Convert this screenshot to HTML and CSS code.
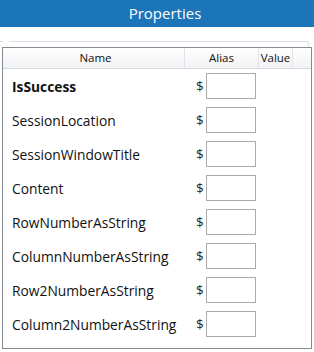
FILE: index.html
```html
<!DOCTYPE html>
<html>
<head>
<meta charset="utf-8">
<link rel="stylesheet" href="styles.css">
</head>
<body>
<div class="panel">
  <div class="title">Properties</div>
  <div class="group">
    <span class="seg"></span>
    <span class="line"></span>
  </div>
  <div class="grid">
    <div class="head">
      <div class="hc hname">Name</div>
      <div class="hc">Alias</div>
      <div class="hc">Value</div>
      <div class="hc hlast"></div>
    </div>
    <div class="row"><div class="name bold">IsSuccess</div><div class="alias"><span class="dollar">$</span><span class="box"></span></div></div>
    <div class="row"><div class="name">SessionLocation</div><div class="alias"><span class="dollar">$</span><span class="box"></span></div></div>
    <div class="row"><div class="name">SessionWindowTitle</div><div class="alias"><span class="dollar">$</span><span class="box"></span></div></div>
    <div class="row"><div class="name">Content</div><div class="alias"><span class="dollar">$</span><span class="box"></span></div></div>
    <div class="row"><div class="name">RowNumberAsString</div><div class="alias"><span class="dollar">$</span><span class="box"></span></div></div>
    <div class="row"><div class="name">ColumnNumberAsString</div><div class="alias"><span class="dollar">$</span><span class="box"></span></div></div>
    <div class="row"><div class="name">Row2NumberAsString</div><div class="alias"><span class="dollar">$</span><span class="box"></span></div></div>
    <div class="row"><div class="name">Column2NumberAsString</div><div class="alias"><span class="dollar">$</span><span class="box"></span></div></div>
  </div>
</div>
</body>
</html>
```
FILE: styles.css
```css
html, body {
  margin: 0;
  padding: 0;
  background: #ffffff;
}
.panel {
  width: 314px;
  height: 352px;
  font-family: "Open Sans", "Noto Sans", sans-serif;
  color: #111;
  overflow: hidden;
}
.title {
  height: 27px;
  background: #1c74b9;
  color: #ffffff;
  font-size: 15px;
  line-height: 26px;
  padding-left: 16px;
  text-align: center;
}
.group {
  display: flex;
  margin-top: 14px;
  height: 6px;
}
.seg {
  width: 3px;
  height: 0;
  border-top: 1px solid #d9dfe4;
}
.line {
  margin-left: 6px;
  width: 299px;
  height: 5px;
  border-top: 1px solid #d9dfe4;
  border-right: 1px solid #d9dfe4;
  border-top-right-radius: 3px;
}
.grid {
  margin: 0 2px 0 2px;
  width: 308px;
  height: 300px;
  border: 1px solid #858a92;
}
.head {
  display: grid;
  grid-template-columns: 182px 74px 34px 1fr;
  height: 20px;
  background: linear-gradient(#ffffff, #f1f2f4);
  border-bottom: 1px solid #d5d9de;
}
.hc {
  font-size: 11.5px;
  line-height: 20px;
  text-align: center;
  color: #111;
  border-right: 1px solid #e2e4e8;
}
.hname {
  padding-left: 4px;
}
.hlast {
  border-right: none;
}
.row {
  display: grid;
  grid-template-columns: 182px 74px;
  height: 34px;
  align-items: center;
}
.name {
  padding-left: 9px;
  font-size: 13.8px;
}
.bold {
  font-weight: bold;
}
.alias {
  display: flex;
  align-items: center;
  padding-left: 11px;
}
.dollar {
  font-size: 13.5px;
  color: #2a2420;
  margin-right: 2px;
}
.box {
  display: block;
  width: 48px;
  height: 24px;
  border: 1px solid #aaaaaa;
  background: #fff;
}
```
